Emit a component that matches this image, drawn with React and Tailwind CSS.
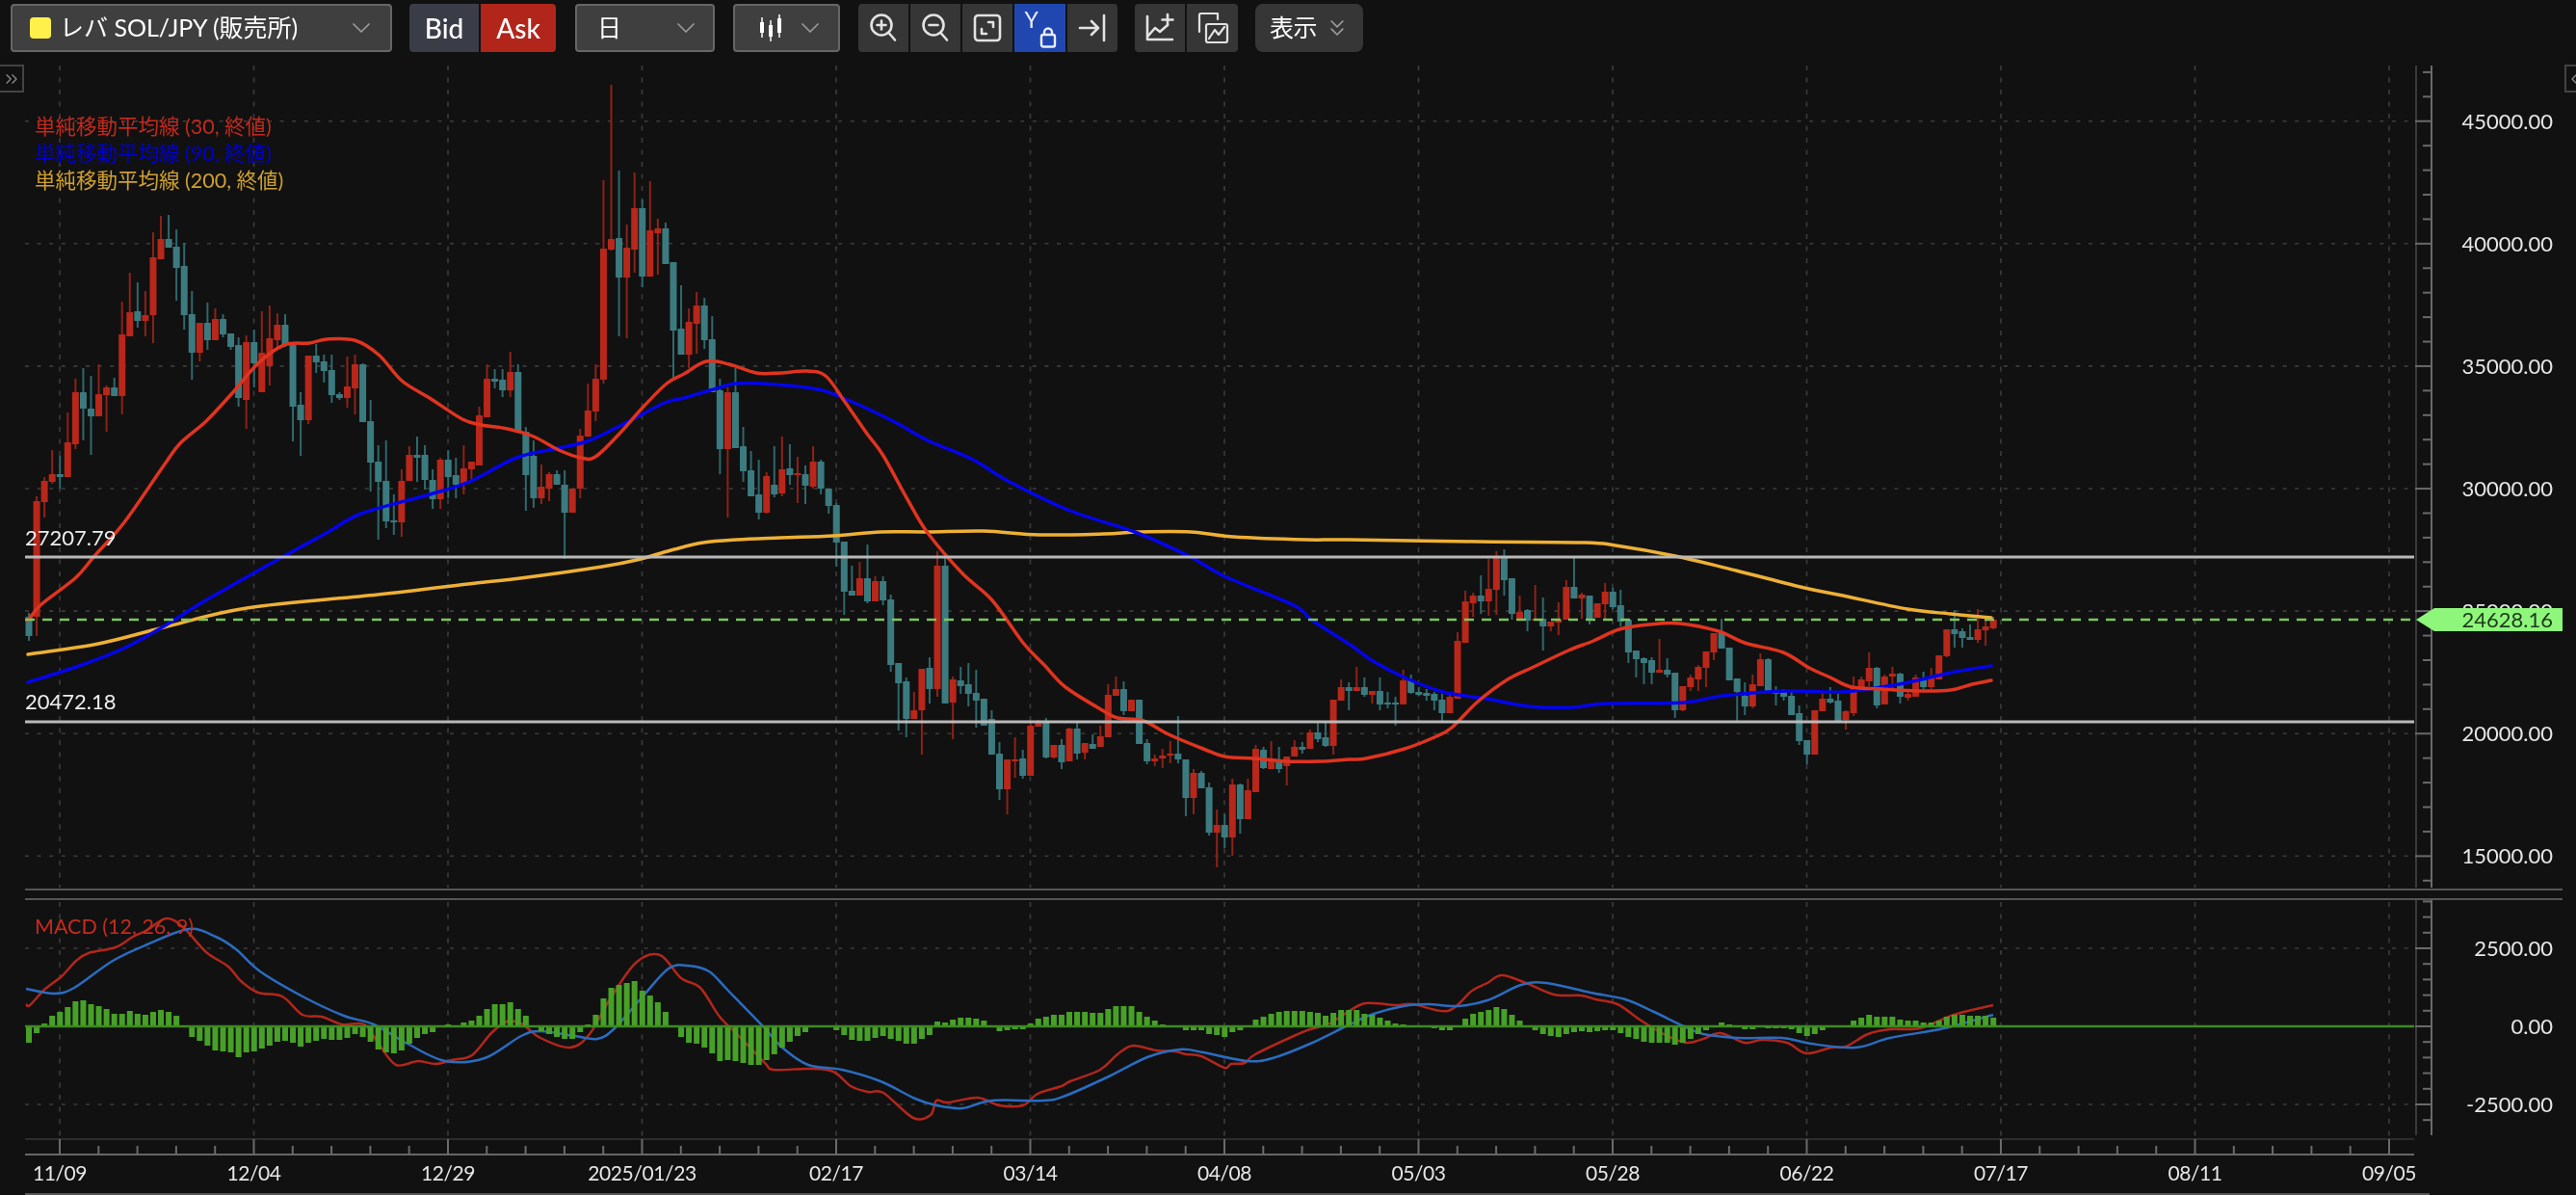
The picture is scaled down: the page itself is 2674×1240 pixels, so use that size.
import { ChevronDown, ChevronsDown, ChevronsLeft, ChevronsRight } from "lucide-react";

const BAR_X = (i) => 30 + 8.06 * i;

// [red?, bodyTop, bodyBottom, wickTop, wickBottom] in chart pixels
const candles = [
  [0,640,660,636,665],[1,520,640,515,660],[1,499,521,495,537],[1,492,500,467,502],[0,492,495,473,507],[1,459,495,428,495],[1,407,461,393,466],[0,407,424,382,457],[0,424,432,390,472],[1,409,432,378,432],
  [1,402,410,400,448],[0,402,411,392,411],[1,347,411,313,430],[1,324,349,283,349],[0,323,333,293,340],[1,327,333,302,349],[1,267,327,241,356],[1,248,269,224,269],[0,248,257,223,257],[0,256,278,238,312],
  [0,276,327,252,342],[0,326,366,302,394],[1,335,366,335,375],[0,335,353,314,363],[1,331,353,320,353],[0,331,347,326,350],[0,346,360,346,363],[0,358,413,350,422],[1,355,415,348,445],[0,355,377,342,402],
  [1,366,407,323,407],[1,351,380,317,400],[1,337,353,325,363],[0,337,357,326,360],[0,357,422,357,458],[0,420,436,407,473],[1,369,436,369,440],[0,369,376,357,387],[0,375,385,368,397],[0,384,410,368,418],
  [0,409,413,407,415],[1,401,413,370,423],[1,378,403,368,430],[0,378,438,377,438],[0,437,480,415,510],[0,479,500,462,560],[0,499,541,457,548],[0,540,542,513,555],[1,499,542,487,557],[1,472,499,463,499],
  [0,472,475,453,500],[0,472,498,462,508],[0,498,518,487,528],[1,477,518,475,528],[0,477,495,467,517],[0,493,503,475,517],[1,486,502,462,513],[1,479,487,479,500],[1,431,483,422,483],[1,393,433,378,433],
  [0,393,396,383,403],[0,394,405,383,412],[1,386,405,365,412],[0,386,447,378,448],[0,448,493,443,530],[0,473,517,457,527],[1,505,517,482,523],[1,492,507,490,520],[0,492,503,488,503],[0,503,532,488,580],
  [1,507,532,507,532],[1,452,507,445,517],[1,426,453,398,453],[1,393,427,378,437],[1,258,394,187,398],[1,248,259,88,260],[0,247,288,177,349],[1,257,288,233,351],[1,216,259,179,283],[0,216,287,207,298],
  [1,239,287,188,287],[1,237,242,227,285],[0,237,274,231,274],[0,272,343,272,393],[0,341,368,296,368],[1,334,368,320,382],[1,317,336,303,367],[0,317,353,309,362],[0,352,407,328,407],[0,405,466,393,492],
  [1,407,466,402,537],[0,407,465,382,465],[0,463,489,443,500],[0,488,515,468,515],[0,513,532,477,539],[1,494,532,490,533],[0,503,513,463,516],[1,487,512,453,515],[0,486,493,461,503],[1,491,493,474,522],
  [0,492,504,483,523],[1,479,505,463,507],[0,479,507,477,513],[0,507,525,507,533],[0,524,563,522,588],[0,562,614,562,638],[0,613,618,587,618],[1,600,618,583,618],[0,600,624,565,626],[1,603,624,598,624],
  [0,603,623,598,628],[0,622,690,617,697],[0,688,709,688,758],[0,707,746,703,765],[1,737,746,718,746],[1,694,737,694,783],[0,693,715,682,730],[1,587,715,572,723],[0,587,730,578,730],[1,705,729,702,767],
  [0,706,712,692,720],[0,710,720,688,733],[0,719,727,695,755],[0,725,753,725,753],[0,746,783,737,783],[0,782,819,770,830],[1,788,819,788,845],[1,788,790,765,807],[0,787,805,778,808],[1,753,805,750,805],
  [1,749,754,747,754],[0,749,786,745,787],[1,773,786,773,787],[0,773,791,767,798],[1,756,790,755,790],[0,756,782,749,788],[1,771,781,771,788],[0,772,777,762,777],[1,764,775,753,775],[1,721,765,710,765],
  [1,715,722,702,722],[0,715,738,707,742],[1,726,738,726,738],[0,726,772,726,772],[0,771,790,767,793],[1,787,790,783,795],[1,784,787,777,797],[1,782,784,769,792],[0,782,788,743,792],[0,788,828,788,847],
  [1,802,828,798,845],[0,802,818,800,818],[0,817,864,812,867],[1,856,864,840,900],[0,856,869,845,880],[1,814,869,808,888],[0,814,850,813,865],[1,820,850,808,850],[1,777,822,773,822],[0,778,797,775,798],
  [1,790,798,769,798],[0,790,798,775,802],[1,785,795,785,815],[1,775,785,768,785],[0,775,778,770,782],[1,760,777,757,777],[0,760,767,748,770],[0,765,774,748,775],[1,726,774,726,783],[1,713,727,705,727],
  [0,713,717,708,737],[1,713,717,692,717],[0,713,721,703,723],[1,717,721,717,730],[0,717,731,703,737],[0,729,731,718,735],[0,729,731,723,753],[1,706,731,695,731],[0,706,719,700,720],[0,718,721,713,722],
  [0,719,722,715,727],[0,720,727,718,737],[0,726,740,720,750],[1,723,740,718,740],[1,665,725,656,725],[1,624,667,613,667],[1,618,626,615,640],[0,618,624,597,637],[1,611,624,580,639],[1,577,612,572,638],
  [0,577,602,570,618],[0,600,637,600,643],[1,635,642,618,642],[0,633,644,632,655],[1,642,644,607,644],[0,642,650,620,675],[1,645,650,645,655],[1,643,646,625,659],[1,609,643,602,643],[0,609,621,578,621],
  [1,617,621,615,642],[0,618,642,618,648],[1,626,641,626,641],[1,614,627,605,642],[0,614,630,610,632],[0,628,645,612,650],[0,643,677,643,688],[0,675,684,675,703],[0,683,688,682,710],[0,685,698,682,710],
  [1,695,698,663,698],[0,695,700,683,703],[0,698,737,698,745],[1,712,737,712,738],[1,703,713,700,717],[1,692,705,690,717],[1,676,693,676,713],[1,657,677,657,685],[0,657,673,642,673],[0,672,706,672,706],
  [0,704,718,704,748],[0,722,733,708,742],[1,710,733,700,735],[1,684,712,678,712],[0,684,717,683,717],[0,717,720,712,732],[0,718,723,715,727],[0,722,742,717,742],[0,740,769,732,773],[0,768,783,768,793],
  [1,737,783,737,783],[1,725,738,717,738],[0,725,729,713,730],[0,727,748,717,748],[1,738,747,737,757],[1,712,740,702,743],[1,705,713,702,715],[1,693,707,677,712],[0,693,732,692,735],[1,702,731,700,731],
  [1,699,702,692,717],[0,699,723,698,730],[1,720,724,717,727],[1,703,723,700,723],[0,705,713,697,715],[1,703,713,693,715],[1,680,705,680,705],[1,653,681,653,682],[0,653,658,633,672],[0,655,662,652,672],
  [0,661,664,648,664],[1,653,664,632,667],[1,650,654,643,670],[1,643,652,640,653],
];

const hist = [
  -17,-7,3,11,15,20,26,27,23,21,18,13,13,16,13,12,15,17,15,11,1,-11,-15,-20,-25,-26,-27,-32,-27,-26,-23,-20,-16,-15,-17,-21,-17,-15,-13,-14,-14,-12,-8,-11,-16,-24,-27,-28,-25,-18,-12,-8,-6,0,2,1,4,6,11,18,23,23,25,18,11,0,-5,-8,-11,-13,-13,-6,2,12,29,40,43,45,47,37,32,25,15,1,
  -11,-17,-18,-22,-28,-36,-35,-36,-38,-40,-40,-35,-29,-22,-16,-10,-6,0,0,0,-4,-9,-14,-15,-15,-12,-10,-13,-15,-18,-18,-13,-9,5,4,7,9,9,8,6,1,-5,-4,-3,-3,3,8,10,12,12,15,15,15,14,14,18,21,21,21,15,10,6,2,0,0,-4,-4,-4,-8,-9,-11,-6,-4,0,7,10,13,15,16,16,16,
  15,14,11,14,17,17,17,13,12,9,6,3,2,1,0,0,-2,-4,-4,1,8,13,15,17,20,18,12,6,0,-4,-8,-10,-11,-8,-6,-5,-6,-5,-4,-4,-7,-11,-13,-16,-17,-17,-17,-19,-17,-13,-8,-4,1,4,2,0,-3,-3,0,-2,-2,-2,-3,-7,-10,-8,-4,0,0,1,6,9,12,10,10,10,7,6,6,4,4,6,10,12,12,11,11,11,9,
];

const sma30 = [[29,644],[43,627],[78,600],[98,577],[129,542],[170,483],[187,460],[214,437],[241,408],[268,377],[295,358],[321,356],[339,352],[368,353],[393,368],[417,395],[446,413],[480,435],[500,441],[527,445],[554,453],[580,467],[603,475],[618,474],[643,450],[667,423],[692,398],[710,388],[733,375],[757,378],[785,387],[810,387],[837,385],[857,390],[877,417],[900,450],[917,473],[943,520],[963,553],[999,595],[1030,623],[1062,667],[1084,690],[1106,713],[1146,738],[1160,745],[1187,748],[1213,762],[1249,777],[1271,785],[1303,787],[1334,790],[1370,790],[1400,788],[1418,787],[1458,777],[1489,765],[1507,755],[1534,728],[1565,705],[1592,692],[1628,675],[1654,665],[1681,653],[1712,648],[1744,647],[1784,655],[1811,667],[1851,677],[1878,693],[1900,703],[1922,713],[1954,715],[1994,717],[2025,716],[2047,710],[2067,706]];
const sma90 = [[29,708],[85,690],[130,672],[170,650],[210,625],[254,600],[295,577],[339,553],[375,533],[446,513],[487,500],[536,475],[580,465],[612,457],[653,437],[690,418],[710,413],[737,405],[763,398],[790,398],[843,403],[873,412],[927,437],[963,457],[1010,477],[1048,500],[1111,530],[1178,552],[1236,578],[1271,598],[1343,628],[1361,643],[1400,668],[1427,687],[1458,703],[1498,718],[1543,725],[1587,733],[1632,734],[1668,730],[1748,729],[1788,722],[1855,717],[1913,718],[1971,710],[2025,698],[2067,691]];
const sma200 = [[29,679],[102,668],[170,651],[256,631],[392,617],[494,605],[540,600],[625,588],[665,580],[700,570],[730,563],[765,560],[810,558],[865,556],[914,552],[963,552],[1021,551],[1079,555],[1146,554],[1182,552],[1236,552],[1280,557],[1356,560],[1400,560],[1534,562],[1645,563],[1677,566],[1739,577],[1802,592],[1873,610],[1913,618],[1980,632],[2025,637],[2067,641]];
const macd = [[27,1042],[31,1043],[46,1027],[64,1013],[79,997],[92,989],[120,983],[138,972],[153,965],[173,953],[191,963],[214,988],[237,1003],[250,1018],[268,1030],[293,1034],[314,1053],[334,1055],[355,1063],[378,1063],[393,1083],[411,1105],[434,1101],[452,1104],[469,1100],[490,1095],[510,1072],[526,1060],[541,1062],[561,1077],[592,1087],[612,1073],[633,1037],[660,999],[685,991],[707,1015],[727,1025],[747,1055],[767,1075],[794,1103],[803,1110],[839,1109],[865,1112],[883,1127],[901,1133],[917,1134],[948,1160],[966,1157],[972,1142],[984,1144],[1015,1139],[1037,1147],[1062,1147],[1077,1135],[1102,1127],[1111,1122],[1142,1110],[1160,1094],[1176,1085],[1200,1090],[1220,1091],[1231,1094],[1247,1096],[1271,1108],[1278,1104],[1292,1103],[1303,1094],[1343,1075],[1360,1068],[1380,1062],[1411,1043],[1426,1041],[1449,1043],[1467,1042],[1503,1049],[1528,1028],[1544,1020],[1559,1012],[1584,1020],[1613,1032],[1641,1033],[1656,1037],[1679,1042],[1702,1058],[1727,1073],[1750,1082],[1768,1078],[1786,1072],[1811,1082],[1829,1079],[1855,1082],[1875,1093],[1901,1087],[1916,1086],[1939,1073],[1962,1068],[1993,1067],[2028,1053],[2069,1043]];
const signal = [[27,1026],[56,1031],[77,1025],[117,997],[153,980],[196,964],[224,972],[245,985],[270,1008],[316,1035],[357,1054],[388,1063],[423,1083],[462,1101],[503,1098],[541,1075],[561,1070],[597,1075],[620,1078],[638,1067],[668,1033],[694,1005],[714,1002],[736,1008],[756,1028],[792,1065],[812,1087],[839,1105],[874,1110],[914,1122],[950,1140],[972,1147],[999,1150],[1030,1142],[1084,1142],[1106,1137],[1151,1117],[1191,1097],[1225,1089],[1249,1092],[1294,1101],[1321,1098],[1360,1083],[1401,1063],[1426,1052],[1457,1044],[1482,1042],[1513,1044],[1544,1038],[1579,1022],[1605,1020],[1651,1030],[1687,1037],[1717,1050],[1748,1065],[1768,1073],[1804,1077],[1850,1077],[1880,1083],[1926,1087],[1962,1077],[2018,1067],[2069,1053]];

const priceTicks = [
  { y: 125.7, label: "45000.00" },
  { y: 252.8, label: "40000.00" },
  { y: 379.9, label: "35000.00" },
  { y: 507, label: "30000.00" },
  { y: 634.1, label: "25000.00" },
  { y: 761.2, label: "20000.00" },
  { y: 888.3, label: "15000.00" },
];
const macdTicks = [
  { y: 984, label: "2500.00" },
  { y: 1065, label: "0.00" },
  { y: 1146, label: "-2500.00" },
];
const dates = ["11/09","12/04","12/29","2025/01/23","02/17","03/14","04/08","05/03","05/28","06/22","07/17","08/11","09/05"];
const DATE_X = (k) => 62 + 201.5 * k;

// catmull-rom through the points, so the averages don't look like polylines
function smooth(pts) {
  let d = `M${pts[0][0]} ${pts[0][1]}`;
  for (let i = 0; i < pts.length - 1; i++) {
    const p0 = pts[i - 1] || pts[i];
    const p1 = pts[i];
    const p2 = pts[i + 1];
    const p3 = pts[i + 2] || p2;
    const c1x = p1[0] + (p2[0] - p0[0]) / 6;
    const c1y = p1[1] + (p2[1] - p0[1]) / 6;
    const c2x = p2[0] - (p3[0] - p1[0]) / 6;
    const c2y = p2[1] - (p3[1] - p1[1]) / 6;
    d += `C${c1x.toFixed(1)} ${c1y.toFixed(1)} ${c2x.toFixed(1)} ${c2y.toFixed(1)} ${p2[0]} ${p2[1]}`;
  }
  return d;
}

function range(from, to, step) {
  const out = [];
  for (let v = from; v <= to + 0.01; v += step) out.push(v);
  return out;
}

function Chart() {
  return (
    <svg viewBox="0 54 2674 1186" width="2674" height="1186" className="block">
      {/* grid */}
      <g stroke="#3c3c3c" strokeWidth="1.6" strokeDasharray="4 8.6">
        {priceTicks.map((t) => (
          <line key={t.y} x1="26" x2="2506" y1={t.y} y2={t.y} />
        ))}
        <line x1="26" x2="2506" y1="984" y2="984" />
        <line x1="26" x2="2506" y1="1146" y2="1146" />
      </g>
      <g stroke="#3c3c3c" strokeWidth="1.6" strokeDasharray="5 7.5">
        {dates.map((d, k) => (
          <g key={d}>
            <line x1={DATE_X(k)} x2={DATE_X(k)} y1="68" y2="921" />
            <line x1={DATE_X(k)} x2={DATE_X(k)} y1="936" y2="1180" />
          </g>
        ))}
      </g>

      {/* candles */}
      {candles.map(([red, top, bot, hi, lo], i) => {
        const x = BAR_X(i);
        const body = red ? "#b8271a" : "#3b7b80";
        const wick = red ? "#8e2217" : "#2f686d";
        return (
          <g key={i}>
            <line x1={x} x2={x} y1={hi} y2={lo} stroke={wick} strokeWidth="2" />
            <rect x={x - 3.5} y={top} width="7" height={Math.max(bot - top, 2)} rx="0.5" fill={body} />
          </g>
        );
      })}

      {/* moving averages */}
      <g fill="none" strokeWidth="3.5" strokeLinecap="round">
        <path d={smooth(sma200)} stroke="#eeb035" />
        <path d={smooth(sma90)} stroke="#0404ea" />
        <path d={smooth(sma30)} stroke="#e0341f" />
      </g>

      {/* horizontal lines */}
      <line x1="26" x2="2506" y1="578" y2="578" stroke="#b9b9b9" strokeWidth="3" />
      <line x1="26" x2="2506" y1="749" y2="749" stroke="#b9b9b9" strokeWidth="3" />
      <line x1="26" x2="2508" y1="643" y2="643" stroke="#7cc65f" strokeWidth="2.5" strokeDasharray="10 8" />
      <text x="26" y="566" fill="#eeeeee" fontSize="22">27207.79</text>
      <text x="26" y="736" fill="#eeeeee" fontSize="22">20472.18</text>

      {/* macd */}
      <g fill="none" strokeWidth="2.5">
        <path d={smooth(macd)} stroke="#b3261b" />
        <path d={smooth(signal)} stroke="#2a6cc0" />
      </g>
      {hist.map((h, i) =>
        h === 0 ? null : (
          <rect
            key={i}
            x={BAR_X(i) - 3}
            y={h > 0 ? 1065 - h : 1065}
            width="6"
            height={Math.abs(h)}
            fill="#47a027"
          />
        )
      )}
      <line x1="26" x2="2506" y1="1065" y2="1065" stroke="#3c8c22" strokeWidth="2.5" />

      {/* separators and frame */}
      <line x1="26" x2="2660" y1="923" y2="923" stroke="#555555" strokeWidth="2" />
      <line x1="26" x2="2660" y1="933" y2="933" stroke="#555555" strokeWidth="2" />
      <line x1="26" x2="2506" y1="1182" y2="1182" stroke="#2c2c2c" strokeWidth="2" />
      <line x1="26" x2="2506" y1="1198" y2="1198" stroke="#666666" strokeWidth="2" />
      <line x1="26" x2="2522" y1="1239" y2="1239" stroke="#555555" strokeWidth="2" />

      {/* price axes */}
      <g stroke="#3a3a3a" strokeWidth="2">
        <line x1="2508" x2="2508" y1="68" y2="921" />
        <line x1="2508" x2="2508" y1="934" y2="1178" />
      </g>
      <g stroke="#6a6a6a" strokeWidth="2">
        <line x1="2524" x2="2524" y1="68" y2="921" />
        <line x1="2524" x2="2524" y1="934" y2="1178" />
        {range(74.9, 914, 25.42).map((y, i) => {
          const major = (i - 2) % 5 === 0;
          return <line key={y} x1={major ? 2507 : 2515} x2="2524" y1={y} y2={y} />;
        })}
        {range(935.4, 1178, 16.2).map((y, i) => {
          const major = (i - 3) % 5 === 0;
          return <line key={y} x1={major ? 2507 : 2515} x2="2524" y1={y} y2={y} />;
        })}
      </g>

      {/* time axis */}
      <g stroke="#6a6a6a" strokeWidth="2">
        {dates.map((d, k) => (
          <line key={d} x1={DATE_X(k)} x2={DATE_X(k)} y1="1182" y2="1198" />
        ))}
        {range(0, 59, 1)
          .filter((n) => n % 5 !== 0)
          .map((n) => (
            <line key={n} x1={62 + 40.3 * n} x2={62 + 40.3 * n} y1="1189" y2="1198" />
          ))}
      </g>
      <g fill="#e6e6e6" fontSize="21" textAnchor="middle" letterSpacing="-0.4">
        {dates.map((d, k) => (
          <text key={d} x={DATE_X(k)} y="1225">{d}</text>
        ))}
      </g>

      <g fill="#e6e6e6" fontSize="22" textAnchor="end">
        {priceTicks.concat(macdTicks).map((t) => (
          <text key={t.label} x="2650" y={t.y + 8}>{t.label}</text>
        ))}
      </g>

      {/* last price */}
      <polygon points="2508,643 2527,631 2660,631 2660,655 2527,655" fill="#8ef77b" />
      <text x="2650" y="651" fontSize="22" textAnchor="end" fill="#1d3a1a">24628.16</text>
    </svg>
  );
}

function Select({ className, children }) {
  return (
    <div className={`flex h-full items-center rounded-[4px] border-2 border-[#666666] bg-[#3f3f3f] ${className}`}>
      {children}
    </div>
  );
}

function IconButton({ active, children, className = "" }) {
  return (
    <div className={`flex h-full w-[52px] items-center justify-center ${active ? "bg-[#2047b0]" : "bg-[#363636]"} ${className}`}>
      {children}
    </div>
  );
}

const ICON = { fill: "none", stroke: "#e2e2e2", strokeWidth: 2.6, strokeLinecap: "round", strokeLinejoin: "round" };

function ZoomIcon({ plus }) {
  return (
    <svg viewBox="0 0 32 32" width="32" height="32" {...ICON}>
      <circle cx="14" cy="13" r="10.5" />
      <path d="M21.5 21 28 28.5M9.5 13h9" />
      {plus && <path d="M14 8.5v9" />}
    </svg>
  );
}

export default function App() {
  return (
    <div className="flex h-[1240px] w-[2674px] flex-col overflow-hidden bg-[#111111] text-white blur-[0.7px] [font-family:Lato,'Noto_Sans_CJK_JP',sans-serif]">
      <div className="flex h-[54px] shrink-0 pl-[11px] pt-[4px]">
        <Select className="w-[396px] pl-[18px]">
          <span className="h-[22px] w-[22px] rounded-[4px] bg-[#fff04a]" />
          <span className="ml-[9px] whitespace-nowrap text-[25px]">レバ SOL/JPY (販売所)</span>
          <ChevronDown className="ml-auto mr-[14px] h-[32px] w-[32px] text-[#9a9a9a]" strokeWidth={1.3} />
        </Select>

        <div className="ml-[18px] flex h-full gap-[2px] text-[28px] font-medium">
          <div className="flex w-[72px] items-center justify-center rounded-l-[4px] bg-[#3a3d48]">Bid</div>
          <div className="flex w-[78px] items-center justify-center rounded-r-[4px] bg-[#b2251a]">Ask</div>
        </div>

        <Select className="ml-[20px] w-[145px] pl-[21px]">
          <span className="text-[25px]">日</span>
          <ChevronDown className="ml-auto mr-[12px] h-[32px] w-[32px] text-[#9a9a9a]" strokeWidth={1.3} />
        </Select>

        <Select className="ml-[19px] w-[111px] pl-[24px]">
          <svg viewBox="0 0 28 28" width="28" height="28" fill="#ffffff" stroke="#ffffff" strokeWidth="1.5">
            <path d="M4 3v21M13 6v22M22 0v24" fill="none" />
            <rect x="2" y="8" width="4" height="11" stroke="none" />
            <rect x="11" y="11" width="4" height="12" stroke="none" />
            <rect x="20" y="4" width="4" height="15" stroke="none" />
          </svg>
          <ChevronDown className="ml-auto mr-[13px] h-[32px] w-[32px] text-[#9a9a9a]" strokeWidth={1.3} />
        </Select>

        <div className="ml-[19px] flex h-full gap-[2px]">
          <IconButton className="rounded-l-[4px]"><ZoomIcon plus /></IconButton>
          <IconButton><ZoomIcon /></IconButton>
          <IconButton>
            <svg viewBox="0 0 30 30" width="30" height="30" {...ICON}>
              <rect x="2" y="2" width="26" height="26" rx="3.5" />
              <path d="M16 9h5v5M9 16v5h5" />
            </svg>
          </IconButton>
          <IconButton active className="w-[53px]">
            <div className="relative h-[36px] w-[34px]">
              <span className="absolute left-[1px] top-[-3px] text-[23px] leading-[24px] text-[#e8ecff]">Y</span>
              <svg viewBox="0 0 18 22" width="18" height="22" className="absolute bottom-[-3px] right-0" fill="none" stroke="#e8ecff" strokeWidth="2.4" strokeLinejoin="round">
                <rect x="2" y="8" width="14" height="12.5" rx="2" />
                <path d="M5 8V5.5a4 4 0 0 1 8 0V8" />
              </svg>
            </div>
          </IconButton>
          <IconButton className="rounded-r-[4px]">
            <svg viewBox="0 0 30 30" width="30" height="30" {...ICON}>
              <path d="M2 15h19M14 8l7 7-7 7M27 2v26" />
            </svg>
          </IconButton>
        </div>

        <div className="ml-[18px] flex h-full gap-[2px]">
          <IconButton className="rounded-l-[4px]">
            <svg viewBox="0 0 32 32" width="32" height="32" {...ICON}>
              <path d="M3 4v24h26M4 24l7-8 5 4 8-7" />
              <path d="M24 2v11M18.5 7.500h11" />
            </svg>
          </IconButton>
          <IconButton className="w-[53px] rounded-r-[4px]">
            <svg viewBox="0 0 34 34" width="34" height="34" {...ICON} strokeWidth="2.2">
              <path d="M3 21V3.500a1.500 1.500 0 0 1 1.500-1.500H22v6" />
              <rect x="10" y="13" width="22" height="19" rx="2" />
              <path d="M13 28l6-9 4 5 6-8" />
            </svg>
          </IconButton>
        </div>

        <div className="ml-[18px] flex h-full w-[112px] items-center rounded-[8px] bg-[#363636] pl-[15px]">
          <span className="text-[25px] tracking-[-0.5px]">表示</span>
          <ChevronsDown className="ml-[7px] h-[28px] w-[28px] text-[#9a9a9a]" strokeWidth={1.5} />
        </div>
      </div>

      <div className="relative min-h-0 flex-1">
        <Chart />

        <div className="absolute left-[36px] top-[63px] flex flex-col text-[21.500px] leading-[28px]">
          <span className="text-[#c2291c]">単純移動平均線 (30, 終値)</span>
          <span className="text-[#0000d0]">単純移動平均線 (90, 終値)</span>
          <span className="text-[#cfa02e]">単純移動平均線 (200, 終値)</span>
        </div>
        <span className="absolute left-[36px] top-[893px] text-[21.500px] leading-[28px] text-[#c8291c]">MACD (12, 26, 9)</span>

        <div className="absolute left-0 top-[13px] flex h-[29px] w-[25px] items-center justify-center border-2 border-l-0 border-[#444444]">
          <ChevronsRight className="h-[20px] w-[20px] text-[#8a8a8a]" strokeWidth={1.6} />
        </div>
        <div className="absolute right-0 top-[13px] flex h-[29px] w-[12px] items-center overflow-hidden border-2 border-r-0 border-[#444444] pl-[1px]">
          <ChevronsLeft className="h-[20px] w-[20px] shrink-0 text-[#8a8a8a]" strokeWidth={1.6} />
        </div>
      </div>
    </div>
  );
}
